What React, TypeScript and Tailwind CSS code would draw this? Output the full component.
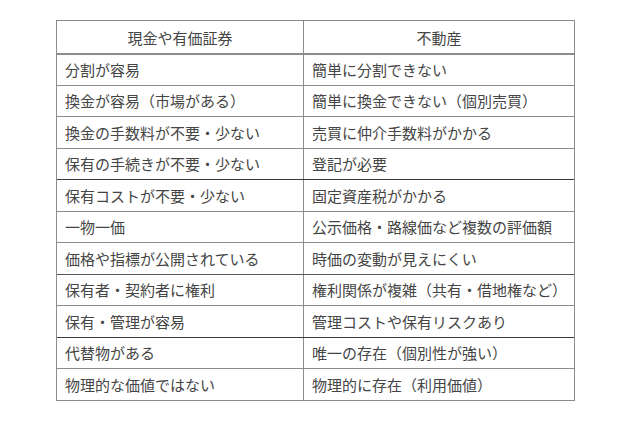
const rows: { left: string; right: string; line: string }[] = [
  { left: "分割が容易", right: "簡単に分割できない", line: "border-t-2 border-[#8c8c8c]" },
  { left: "換金が容易（市場がある）", right: "簡単に換金できない（個別売買）", line: "border-t border-[#8c8c8c]" },
  { left: "換金の手数料が不要・少ない", right: "売買に仲介手数料がかかる", line: "border-t border-[#8c8c8c]" },
  { left: "保有の手続きが不要・少ない", right: "登記が必要", line: "border-t border-[#8c8c8c]" },
  { left: "保有コストが不要・少ない", right: "固定資産税がかかる", line: "border-t border-[#3a3a3a]" },
  { left: "一物一価", right: "公示価格・路線価など複数の評価額", line: "border-t border-[#8c8c8c]" },
  { left: "価格や指標が公開されている", right: "時価の変動が見えにくい", line: "border-t border-[#8c8c8c]" },
  { left: "保有者・契約者に権利", right: "権利関係が複雑（共有・借地権など）", line: "border-t border-[#555555]" },
  { left: "保有・管理が容易", right: "管理コストや保有リスクあり", line: "border-t border-[#8c8c8c]" },
  { left: "代替物がある", right: "唯一の存在（個別性が強い）", line: "border-t border-[#3a3a3a]" },
  { left: "物理的な価値ではない", right: "物理的に存在（利用価値）", line: "border-t border-[#8c8c8c]" },
]

export default function App() {
  return (
    <div
      className="min-h-[427px] w-[640px] bg-white pl-[56px] pt-[20px] text-[15px] font-normal text-[#454545]"
      style={{ fontFamily: '"Noto Sans CJK JP", "Noto Sans", sans-serif' }}
    >
      <div className="w-[519px] border border-[#8c8c8c]">
        <div className="grid h-[32px] grid-cols-[246px_1fr] leading-none">
          <div className="flex items-center justify-center">現金や有価証券</div>
          <div className="flex items-center justify-center border-l border-[#8c8c8c]">
            不動産
          </div>
        </div>

        {rows.map((r) => (
          <div key={r.left} className={`grid h-[31.5px] grid-cols-[246px_1fr] leading-none ${r.line}`}>
            <div className="flex items-center pl-[8px] whitespace-nowrap">{r.left}</div>
            <div className="flex items-center border-l border-[#8c8c8c] pl-[8px] whitespace-nowrap">
              {r.right}
            </div>
          </div>
        ))}
      </div>
    </div>
  )
}
